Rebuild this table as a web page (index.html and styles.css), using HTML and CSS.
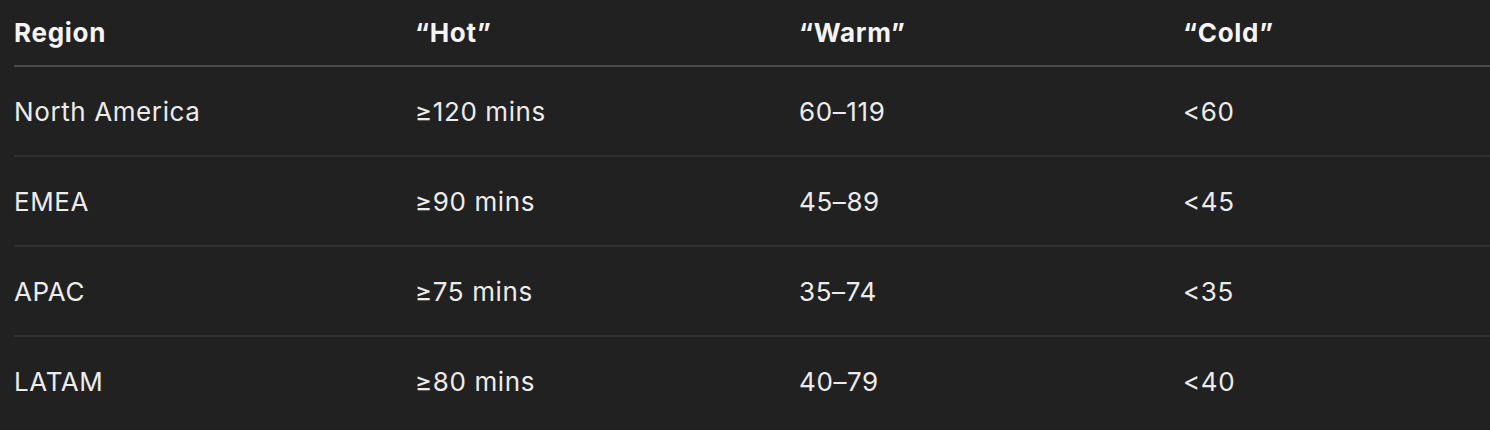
FILE: index.html
```html
<!DOCTYPE html>
<html>
<head>
<meta charset="utf-8">
<link rel="stylesheet" href="styles.css">
</head>
<body>
<div class="table">
  <div class="row head">
    <div class="cell">Region</div>
    <div class="cell">“Hot”</div>
    <div class="cell">“Warm”</div>
    <div class="cell">“Cold”</div>
  </div>
  <div class="row">
    <div class="cell">North America</div>
    <div class="cell">≥120 mins</div>
    <div class="cell">60–119</div>
    <div class="cell">&lt;60</div>
  </div>
  <div class="row">
    <div class="cell">EMEA</div>
    <div class="cell">≥90 mins</div>
    <div class="cell">45–89</div>
    <div class="cell">&lt;45</div>
  </div>
  <div class="row">
    <div class="cell">APAC</div>
    <div class="cell">≥75 mins</div>
    <div class="cell">35–74</div>
    <div class="cell">&lt;35</div>
  </div>
  <div class="row last">
    <div class="cell">LATAM</div>
    <div class="cell">≥80 mins</div>
    <div class="cell">40–79</div>
    <div class="cell">&lt;40</div>
  </div>
</div>
</body>
</html>
```

FILE: styles.css
```css
html, body {
  margin: 0;
  padding: 0;
  background: #212121;
}
body {
  font-family: Inter, "Noto Sans", sans-serif;
  font-size: 26px;
  letter-spacing: 0.6px;
  color: #ececec;
  padding-left: 14px;
  overflow: hidden;
}
.table {
  display: flex;
  flex-direction: column;
}
.row {
  display: grid;
  grid-template-columns: 401px 384px 384px 1fr;
  height: 88px;
  align-items: center;
  border-bottom: 2px solid #303030;
}
.row.head {
  height: 65px;
  font-weight: 700;
  letter-spacing: 0.7px;
  color: #f4f4f4;
  border-bottom: 2px solid #4a4a4a;
}
.row.last {
  border-bottom: none;
}
.cell {
  white-space: nowrap;
}
```
